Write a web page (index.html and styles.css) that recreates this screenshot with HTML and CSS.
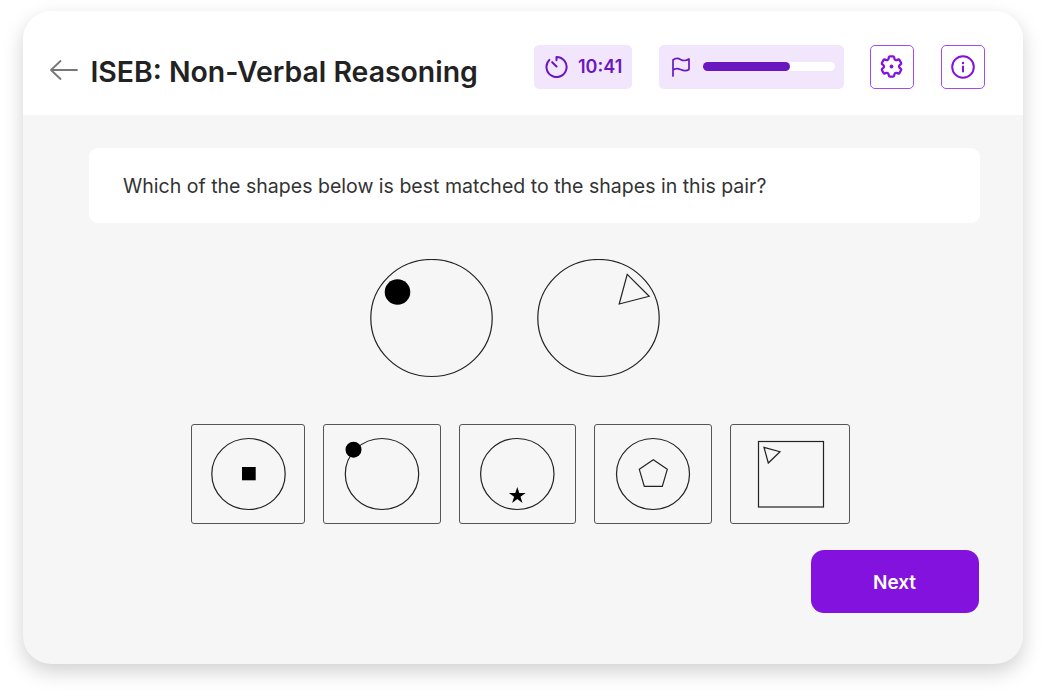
FILE: index.html
```html
<!DOCTYPE html>
<html lang="en">
<head>
    <meta charset="UTF-8">
    <meta name="viewport" content="width=device-width, initial-scale=1.0">
    <title>ISEB: Non-Verbal Reasoning</title>
    <link rel="stylesheet" href="styles.css">
</head>
<body>
    <div class="card">
        <header class="topbar">
            <svg class="back" viewBox="0 0 28 20" fill="none" stroke="#777" stroke-width="1.8" stroke-linecap="round" stroke-linejoin="round">
                <path d="M27 10H1M10.500 1 1 10l9.500 9"/>
            </svg>
            <h1 class="title">ISEB: Non-Verbal Reasoning</h1>
            <div class="chip timer">
                <svg class="timer-icon" viewBox="0 0 24 24" fill="none" stroke="#6a17c0" stroke-width="2.100" stroke-linecap="round">
                    <path d="M12 2a10.500 10.500 0 1 1-7.400 3.100M12 2v3.500M7.500 7.500l4.500 4.500"/>
                </svg>
                <span>10:41</span>
            </div>
            <div class="chip progress">
                <svg class="flag-icon" viewBox="0 0 20 20" fill="none" stroke="#6a17c0" stroke-width="1.700" stroke-linecap="round" stroke-linejoin="round">
                    <path d="M2 19V3c2.500-2 5-2 7.500-.6S15 4 18 2v10.500c-3 2-5.500 1.300-8.500 0S4.500 11 2 13"/>
                </svg>
                <div class="track"><div class="fill"></div></div>
            </div>
            <button class="icon-btn">
                <svg class="gear" viewBox="0 0 24 24" fill="none" stroke="#8312de" stroke-width="2" stroke-linejoin="round">
                    <path d="M9.594 3.940c.09-.542.56-.94 1.110-.94h2.593c.55 0 1.020.398 1.110.94l.213 1.281c.063.374.313.686.645.870.074.04.147.083.22.127.325.196.72.257 1.075.124l1.217-.456a1.125 1.125 0 0 1 1.370.49l1.296 2.247a1.125 1.125 0 0 1-.26 1.431l-1.003.827c-.293.241-.438.613-.43.992a7.723 7.723 0 0 1 0 .255c-.008.378.137.75.43.991l1.004.827c.424.35.534.955.26 1.430l-1.298 2.247a1.125 1.125 0 0 1-1.369.491l-1.217-.456c-.355-.133-.75-.072-1.076.124a6.470 6.470 0 0 1-.22.128c-.331.183-.581.495-.644.869l-.213 1.281c-.09.543-.56.94-1.110.94h-2.594c-.55 0-1.019-.398-1.110-.94l-.213-1.281c-.062-.374-.312-.686-.644-.87a6.520 6.520 0 0 1-.22-.127c-.325-.196-.72-.257-1.076-.124l-1.217.456a1.125 1.125 0 0 1-1.369-.49l-1.297-2.247a1.125 1.125 0 0 1 .26-1.431l1.004-.827c.292-.24.437-.613.43-.991a6.932 6.932 0 0 1 0-.255c.007-.38-.138-.751-.43-.992l-1.004-.827a1.125 1.125 0 0 1-.26-1.430l1.297-2.247a1.125 1.125 0 0 1 1.370-.491l1.216.456c.356.133.751.072 1.076-.124.072-.044.146-.086.22-.128.332-.183.582-.495.644-.869l.214-1.280Z"/>
                    <circle cx="12" cy="12" r="1.700" fill="#8312de" stroke="none"/>
                </svg>
            </button>
            <button class="icon-btn">
                <svg class="info" viewBox="0 0 24 24" fill="none" stroke="#8312de" stroke-width="2" stroke-linecap="round">
                    <circle cx="12" cy="12" r="10.800"/>
                    <path d="M12 11.500v5"/>
                    <circle cx="12" cy="8" r="1.200" fill="#8312de" stroke="none"/>
                </svg>
            </button>
        </header>

        <main class="content">
            <div class="question">Which of the shapes below is best matched to the shapes in this pair?</div>

            <div class="pair">
                <svg class="pair-shape" viewBox="0 0 124 119" fill="none" stroke="#222" stroke-width="1.200">
                    <ellipse cx="61.500" cy="59" rx="60.700" ry="58.500"/>
                    <circle cx="27.500" cy="33" r="12.800" fill="#000" stroke="none"/>
                </svg>
                <svg class="pair-shape" viewBox="0 0 124 119" fill="none" stroke="#222" stroke-width="1.200">
                    <ellipse cx="61.500" cy="59" rx="60.700" ry="58.500"/>
                    <path d="M90.200 15.300 112.200 37.300 82.200 45Z"/>
                </svg>
            </div>

            <div class="options">
                <div class="option opt-a">
                    <svg viewBox="0 0 114 100" fill="none" stroke="#222" stroke-width="1.200">
                        <ellipse cx="57.500" cy="50" rx="36.700" ry="35.500"/>
                        <rect x="51" y="43" width="13.700" height="13.300" fill="#000" stroke="none"/>
                    </svg>
                </div>
                <div class="option opt-b">
                    <svg viewBox="0 0 118 100" fill="none" stroke="#222" stroke-width="1.200">
                        <ellipse cx="59" cy="50" rx="36.700" ry="35.500"/>
                        <circle cx="30.500" cy="25.700" r="8" fill="#000" stroke="none"/>
                    </svg>
                </div>
                <div class="option opt-c">
                    <svg viewBox="0 0 117 100" fill="none" stroke="#222" stroke-width="1.200">
                        <ellipse cx="58.300" cy="50" rx="36.700" ry="35.500"/>
                        <path d="M58.300 63 60.300 69 66.700 69 61.500 72.800 63.500 79 58.300 75.100 53.100 79 55.100 72.800 49.900 69 56.300 69Z" fill="#000" stroke="none"/>
                    </svg>
                </div>
                <div class="option opt-d">
                    <svg viewBox="0 0 118 100" fill="none" stroke="#222" stroke-width="1.200">
                        <ellipse cx="59" cy="50" rx="36.500" ry="35.500"/>
                        <path d="M59.300 35.700 73.300 45.300 68.300 62.300 50.300 62.300 45.300 45.300Z"/>
                    </svg>
                </div>
                <div class="option opt-e">
                    <svg viewBox="0 0 120 100" fill="none" stroke="#222" stroke-width="1.200">
                        <rect x="28.500" y="17.500" width="65" height="65.500"/>
                        <path d="M34 23.300 50 27.700 38.300 39Z"/>
                    </svg>
                </div>
            </div>

            <div class="actions">
                <button class="next">Next</button>
            </div>
        </main>
    </div>
</body>
</html>
```

FILE: styles.css
```css
html{
    box-sizing: border-box;
    font-family: "Inter", "Liberation Sans", sans-serif;
    color: #222;
}
*, *::before, *::after{
    box-sizing: inherit;
}
body{
    margin: 0;
    height: 698px;
    overflow: hidden;
    background: #fff;
    padding: 11px 0 0 22.5px;
}
.card{
    width: 1000px;
    height: 653px;
    border-radius: 28px;
    background: #f6f6f6;
    box-shadow: 0 8px 20px rgba(0, 0, 0, 0.18);
    overflow: hidden;
}
.topbar{
    height: 104px;
    background: #fff;
    display: flex;
    align-items: center;
    padding: 7px 38px 0 27px;
    margin: 0;
}
.back{
    width: 28px;
    height: 20px;
    flex: none;
    margin: 7px 13px 0 0;
}
.title{
    margin: 9px auto 0 0;
    font-size: 28.4px;
    font-weight: 600;
    color: #222;
    white-space: nowrap;
}
.chip{
    height: 44px;
    background: #f2e6fd;
    border-radius: 5px;
    display: flex;
    align-items: center;
}
.timer{
    width: 98px;
    padding-left: 11px;
    font-size: 18px;
    font-weight: 600;
    color: #6a17c0;
}
.timer-icon{
    width: 23px;
    height: 23px;
    margin-right: 10.5px;
}
.progress{
    width: 185px;
    margin: 0 26px 0 27px;
    padding: 0 9px 0 12px;
}
.flag-icon{
    width: 20px;
    height: 20px;
    margin-right: 12px;
}
.track{
    flex: 1;
    height: 9px;
    background: #fff;
    border-radius: 5px;
}
.fill{
    width: 66%;
    height: 100%;
    background: #6a17c0;
    border-radius: 5px;
}
.icon-btn{
    width: 44px;
    height: 44px;
    padding: 0;
    background: #fff;
    border: 1px solid #a04df0;
    border-radius: 5px;
    display: flex;
    align-items: center;
    justify-content: center;
}
.icon-btn + .icon-btn{
    margin-left: 27px;
}
.gear{
    width: 27px;
    height: 27px;
}
.info{
    width: 24px;
    height: 24px;
}
.content{
    padding: 33px 43px 0 66.5px;
}
.question{
    height: 75px;
    background: #fff;
    border-radius: 9px;
    padding-left: 34px;
    display: flex;
    align-items: center;
    font-size: 19.55px;
    color: #333;
}
.pair{
    display: flex;
    justify-content: center;
    gap: 43px;
    margin: 35.5px 0 0 -38px;
}
.pair-shape{
    width: 124px;
    height: 119px;
    display: block;
}
.options{
    display: flex;
    gap: 18px;
    margin: 46.5px 0 0 101.5px;
}
.option{
    height: 100px;
    border: 1px solid #555;
    border-radius: 3px;
    position: relative;
}
.option svg{
    position: absolute;
    top: -1px;
    left: -0.5px;
    width: calc(100% + 2px);
    height: 100px;
    overflow: visible;
}
.opt-a{ width: 114px; }
.opt-b{ width: 118px; }
.opt-c{ width: 117px; }
.opt-d{ width: 118px; }
.opt-e{ width: 120px; }
.actions{
    display: flex;
    justify-content: flex-end;
    margin: 26px 1px 0 0;
}
.next{
    width: 168px;
    height: 63px;
    border: none;
    border-radius: 13px;
    padding-top: 2px;
    background: #8312de;
    color: #fff;
    font-family: inherit;
    font-size: 19px;
    font-weight: 600;
}
```
